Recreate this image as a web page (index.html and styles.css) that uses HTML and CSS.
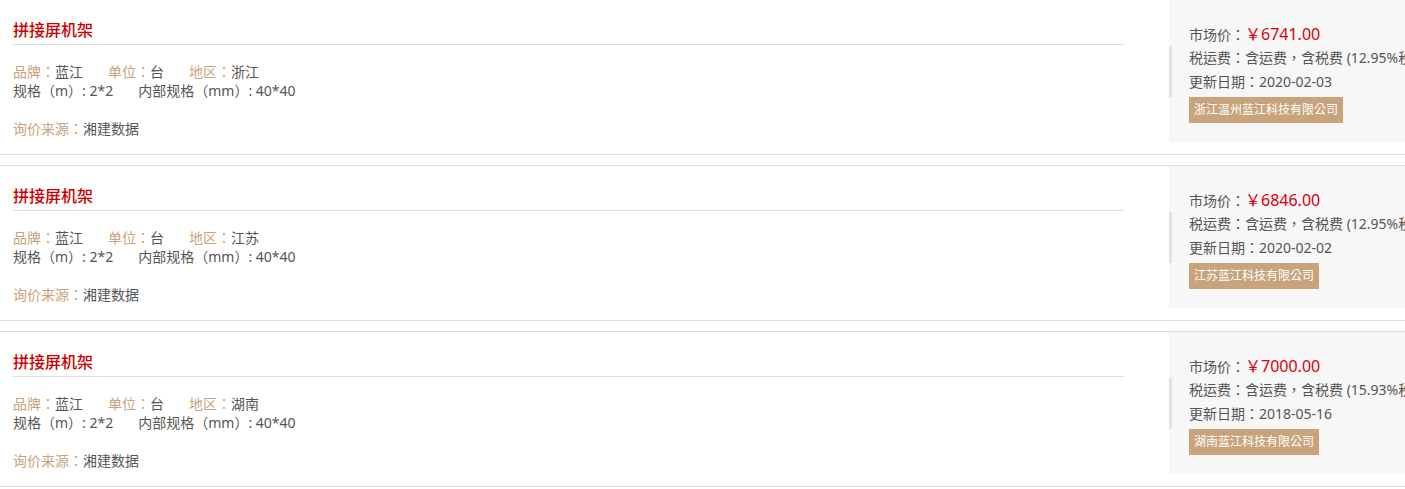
FILE: index.html
```html
<!DOCTYPE html>
<html lang="zh-TW">
<head>
<meta charset="utf-8">
<title>拼接屏机架</title>
<link rel="stylesheet" href="styles.css">
</head>
<body>
<div class="list">
  <div class="card">
    <div class="main">
      <h3 class="title">拼接屏机架</h3>
      <div class="row"><span class="item"><span class="lbl">品牌：</span>蓝江</span><span class="item"><span class="lbl">单位：</span>台</span><span class="item"><span class="lbl">地区：</span>浙江</span></div>
      <div class="row"><span class="item">规格（m）: 2*2</span><span class="item">内部规格（mm）: 40*40</span></div>
      <div class="row source"><span class="lbl">询价来源：</span>湘建数据</div>
    </div>
    <div class="side">
      <span class="bar"></span>
      <div class="price-row">市场价：<span class="price">￥6741.00</span></div>
      <div class="srow">税运费：含运费，含税费 (12.95%税)</div>
      <div class="srow">更新日期：2020-02-03</div>
      <span class="tag">浙江温州蓝江科技有限公司</span>
    </div>
  </div>
  <div class="card">
    <div class="main">
      <h3 class="title">拼接屏机架</h3>
      <div class="row"><span class="item"><span class="lbl">品牌：</span>蓝江</span><span class="item"><span class="lbl">单位：</span>台</span><span class="item"><span class="lbl">地区：</span>江苏</span></div>
      <div class="row"><span class="item">规格（m）: 2*2</span><span class="item">内部规格（mm）: 40*40</span></div>
      <div class="row source"><span class="lbl">询价来源：</span>湘建数据</div>
    </div>
    <div class="side">
      <span class="bar"></span>
      <div class="price-row">市场价：<span class="price">￥6846.00</span></div>
      <div class="srow">税运费：含运费，含税费 (12.95%税)</div>
      <div class="srow">更新日期：2020-02-02</div>
      <span class="tag">江苏蓝江科技有限公司</span>
    </div>
  </div>
  <div class="card">
    <div class="main">
      <h3 class="title">拼接屏机架</h3>
      <div class="row"><span class="item"><span class="lbl">品牌：</span>蓝江</span><span class="item"><span class="lbl">单位：</span>台</span><span class="item"><span class="lbl">地区：</span>湖南</span></div>
      <div class="row"><span class="item">规格（m）: 2*2</span><span class="item">内部规格（mm）: 40*40</span></div>
      <div class="row source"><span class="lbl">询价来源：</span>湘建数据</div>
    </div>
    <div class="side">
      <span class="bar"></span>
      <div class="price-row">市场价：<span class="price">￥7000.00</span></div>
      <div class="srow">税运费：含运费，含税费 (15.93%税)</div>
      <div class="srow">更新日期：2018-05-16</div>
      <span class="tag">湖南蓝江科技有限公司</span>
    </div>
  </div>
</div>
</body>
</html>
```

FILE: styles.css
```css
html, body {
  margin: 0;
  padding: 0;
  overflow: hidden;
  background: #fff;
}
body {
  font-family: "Noto Sans", "Noto Sans CJK TC", "Noto Sans CJK SC", sans-serif;
  font-size: 14px;
  color: #555;
}
.list {
  width: 1480px;
}
.card {
  display: flex;
  gap: 45px;
  border-top: 1px solid #ddd;
  border-bottom: 1px solid #ddd;
  padding-bottom: 12px;
  margin-bottom: 10px;
}
.card:first-child {
  border-top: 0;
}
.main {
  width: 1111px;
  margin-left: 13px;
  padding-top: 18px;
}
.title {
  margin: 0;
  font-size: 16px;
  font-weight: 500;
  line-height: 24px;
  color: #cc0000;
  padding-bottom: 2px;
  border-bottom: 1px solid #ddd;
}
.row {
  line-height: 19px;
  white-space: nowrap;
}
.title + .row {
  margin-top: 17px;
}
.item {
  margin-right: 25px;
}
.lbl {
  color: #c9a27e;
}
.source {
  margin-top: 19px;
}
.side {
  position: relative;
  flex: 1;
  height: 142px;
  background: #f7f7f7;
  padding: 23px 0 0 20px;
  box-sizing: border-box;
  white-space: nowrap;
}
.bar {
  position: absolute;
  left: 0;
  top: 46px;
  width: 3px;
  height: 51px;
  background: #e9e9e9;
  box-shadow: inset 0 0 0 1px #e0e0e0;
}
.price-row {
  line-height: 22px;
}
.price {
  color: #d7000f;
  font-size: 16px;
}
.srow {
  line-height: 24px;
}
.tag {
  display: inline-block;
  margin-top: 3px;
  padding: 0 5px;
  height: 26px;
  line-height: 26px;
  font-size: 12px;
  color: #fff;
  background: #c8a37b;
}
```
